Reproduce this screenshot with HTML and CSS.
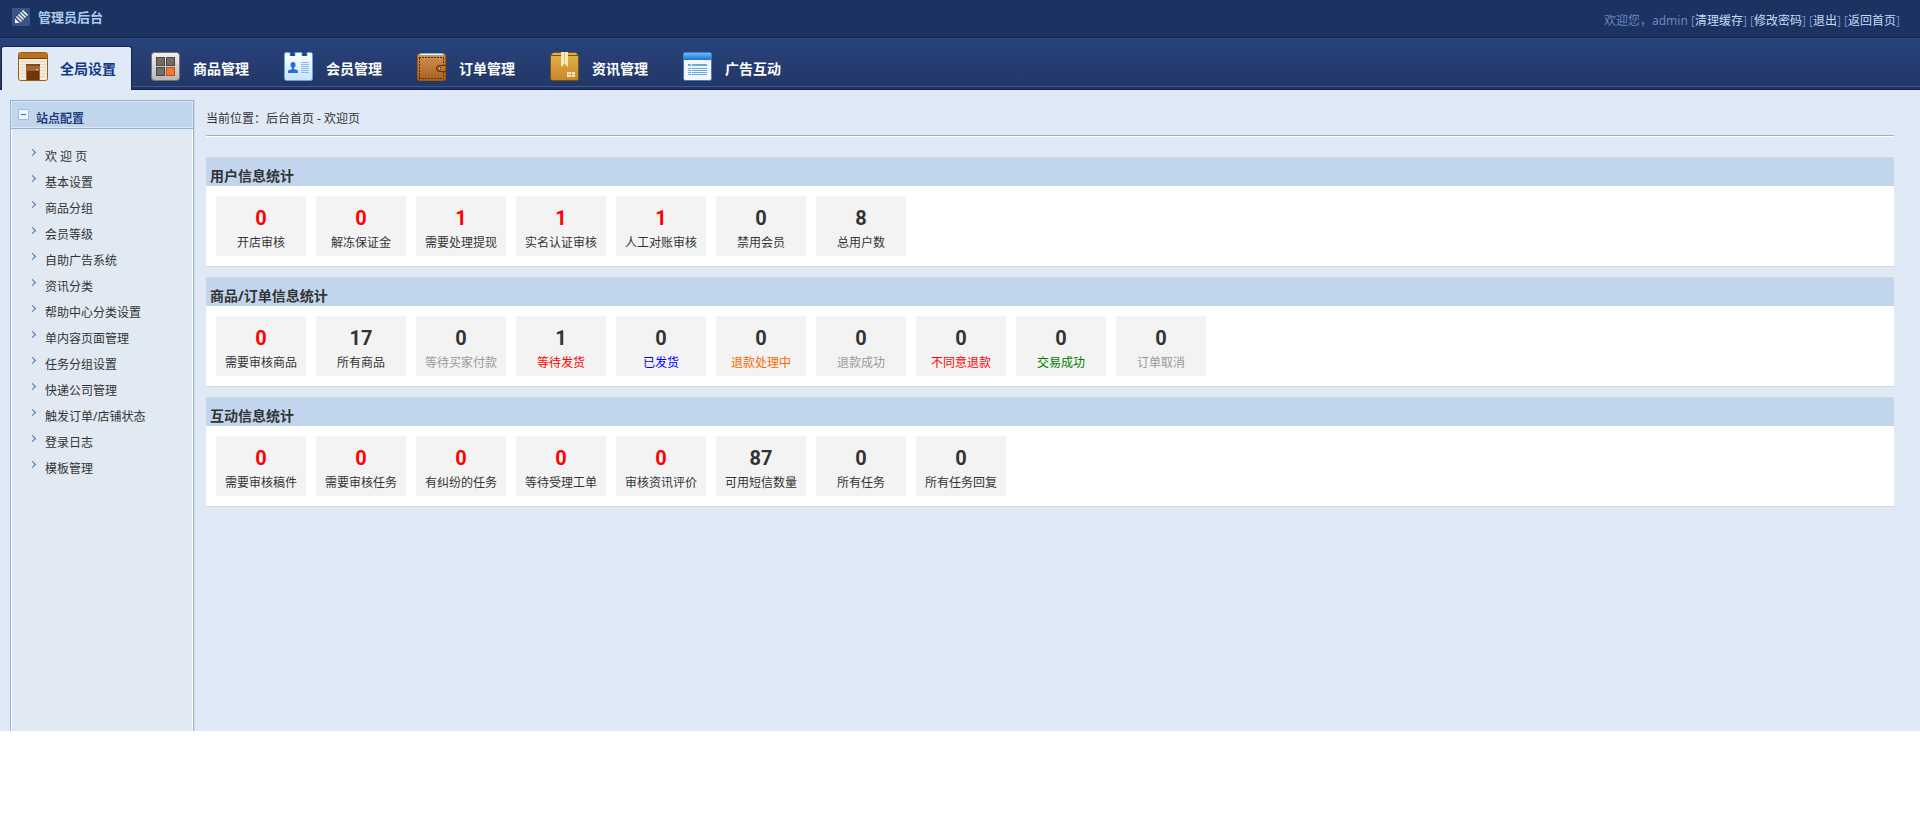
FILE: index.html
```html
<!DOCTYPE html>
<html lang="zh-CN">
<head>
  <meta charset="UTF-8">
  <meta name="viewport" content="width=device-width, initial-scale=1.0">
  <title>管理员后台</title>
  <link rel="stylesheet" href="styles.css">
</head>
<body>
  <header class="top">
    <h1 class="logo">
      <svg width="18" height="18" viewBox="0 0 18 18">
        <rect width="18" height="18" rx="1" fill="#3a5389"/>
        <path d="M3 15v-4.500l4.500 4.500z" fill="#fff"/>
        <path d="M4.500 8.500l5 5M6.500 6.500l5 5M8.500 4.500l5 5M10.500 2.500l5 5" stroke="#fff" stroke-width="1.500"/>
      </svg>
      管理员后台
    </h1>
    <p class="user">欢迎您，admin [<a href="#">清理缓存</a>] [<a href="#">修改密码</a>] [<a href="#">退出</a>] [<a href="#">返回首页</a>]</p>
  </header>

  <nav class="nav">
    <a href="#" class="tab active">
      <svg width="30" height="30" viewBox="0 0 30 30">
        <rect x=".5" y=".5" width="29" height="28" rx="2" fill="#f4ecdc" stroke="#a35a10"/>
        <path d="M2 9.500h26M2 12.500h26M2 15.500h26M2 18.500h26M2 21.500h26M2 24.500h26" stroke="#e2d7c2"/>
        <path d="M1 6V2q0-1 1-1h26q1 0 1 1v4z" fill="#b9711a"/>
        <path d="M1 6.500h28" stroke="#7c3b06"/>
        <rect x="8" y="12" width="14" height="16" fill="#a0683a"/>
        <path d="M8 12h14v2H8z" fill="#7e4a20"/>
        <rect x="9" y="19" width="12" height="9" fill="#74340a"/>
        <path d="M18 17.500h2" stroke="#f3c98a"/>
      </svg>
      <span>全局设置</span>
    </a>
    <a href="#" class="tab">
      <svg width="30" height="30" viewBox="0 0 30 30">
        <defs><linearGradient id="grey" x2="0" y2="1"><stop stop-color="#f2f2f2"/><stop offset="1" stop-color="#b5b5b5"/></linearGradient></defs>
        <rect x=".5" y=".5" width="28" height="28" rx="3" fill="url(#grey)" stroke="#77726e"/>
        <g fill="#756c67" stroke="#4b4542">
          <rect x="5.500" y="5.500" width="8" height="8"/>
          <rect x="15.500" y="5.500" width="8" height="8"/>
          <rect x="5.500" y="15.500" width="8" height="8"/>
        </g>
        <rect x="15.500" y="15.500" width="8" height="8" fill="#ee7a35" stroke="#c64d12"/>
      </svg>
      <span>商品管理</span>
    </a>
    <a href="#" class="tab">
      <svg width="30" height="30" viewBox="0 0 30 30">
        <defs><linearGradient id="card" x2="0" y2="1"><stop stop-color="#fff"/><stop offset="1" stop-color="#c5e4fb"/></linearGradient></defs>
        <path d="M2 .500h4v3h5v-3h7v3h5v-3h4q1.500 0 1.500 2v24q0 2-2 2H2.500q-2 0-2-2v-24q0-2 1.500-2z" fill="url(#card)" stroke="#6aa1ea"/>
        <path d="M8.500 0v4M20.500 0v4M6 3.500h5M18 3.500h5" stroke="#244a94"/>
        <ellipse cx="9" cy="13" rx="2.500" ry="3" fill="#2a6de0"/>
        <path d="M8 15h2v2l4 1.500V21H4v-2.500L8 17z" fill="#2a6de0"/>
        <path d="M17 10.500h8M17 12.500h8M17 14.500h8M17 16.500h8M17 18.500h8M17 20.500h8" stroke="#8fb6ee"/>
      </svg>
      <span>会员管理</span>
    </a>
    <a href="#" class="tab">
      <svg width="30" height="30" viewBox="0 0 30 30">
        <defs><linearGradient id="leather" x2="0" y2="1"><stop stop-color="#d2945c"/><stop offset="1" stop-color="#a9601a"/></linearGradient></defs>
        <rect x=".5" y="1.500" width="28" height="27" rx="2" fill="url(#leather)" stroke="#a4570f"/>
        <path d="M3 2.500h23" stroke="#e8f6fb"/>
        <path d="M4 1.500h22" stroke="#4fc3e4"/>
        <path d="M2 5.500h25M2.500 6v20M2 26.500h25M26.500 6v7M26.500 20v6" stroke="#5b2d08" stroke-dasharray="2 1" fill="none"/>
        <path d="M29 13.500h-7q-2.500 0-2.500 3t2.500 3h7z" fill="#c07728" stroke="#653208"/>
        <circle cx="22.500" cy="16.500" r="1.500" fill="#f2e2c2" stroke="#4d2504"/>
      </svg>
      <span>订单管理</span>
    </a>
    <a href="#" class="tab">
      <svg width="30" height="30" viewBox="0 0 30 30">
        <defs><linearGradient id="box" x2="0" y2="1"><stop stop-color="#e3b447"/><stop offset="1" stop-color="#c7862a"/></linearGradient></defs>
        <path d="M3 .500h23l2.500 3v23q0 2-2 2h-24q-2 0-2-2v-23z" fill="url(#box)" stroke="#79501a"/>
        <path d="M1 3.500h27" stroke="#79501a"/>
        <path d="M11 0h7v15l-3.500-3.500L11 15z" fill="#f8e8b8"/>
        <path d="M14.500 0v11" stroke="#e0c47c"/>
        <rect x="17" y="20" width="8" height="5" fill="#f6e6be"/>
        <path d="M18 22.500h6M21.500 20v5" stroke="#d9b36a"/>
      </svg>
      <span>资讯管理</span>
    </a>
    <a href="#" class="tab">
      <svg width="30" height="30" viewBox="0 0 30 30">
        <defs><linearGradient id="blue" x2="0" y2="1"><stop stop-color="#69bdf5"/><stop offset="1" stop-color="#1670d2"/></linearGradient></defs>
        <rect x=".5" y=".5" width="28" height="28" rx="2" fill="#f4f5f7" stroke="#3f7ccc"/>
        <path d="M1 8V2q0-1 1-1h25q1 0 1 1v6z" fill="url(#blue)"/>
        <path d="M5 13h3M9 13h15" stroke="#62a8e2" stroke-width="2"/>
        <path d="M5 16.500h3M9 16.500h15M5 18.500h3M9 18.500h15M5 20.500h3M9 20.500h15M5 22.500h3M9 22.500h15" stroke="#62a8e2"/>
      </svg>
      <span>广告互动</span>
    </a>
  </nav>

  <div class="page">
    <aside class="sidebar">
      <h2><button type="button" class="toggle" aria-label="收起"></button>站点配置</h2>
      <ul>
        <li><a href="#">欢 迎 页</a></li>
        <li><a href="#">基本设置</a></li>
        <li><a href="#">商品分组</a></li>
        <li><a href="#">会员等级</a></li>
        <li><a href="#">自助广告系统</a></li>
        <li><a href="#">资讯分类</a></li>
        <li><a href="#">帮助中心分类设置</a></li>
        <li><a href="#">单内容页面管理</a></li>
        <li><a href="#">任务分组设置</a></li>
        <li><a href="#">快递公司管理</a></li>
        <li><a href="#">触发订单/店铺状态</a></li>
        <li><a href="#">登录日志</a></li>
        <li><a href="#">模板管理</a></li>
      </ul>
    </aside>

    <main class="main">
      <p class="position">当前位置：后台首页 - 欢迎页</p>

      <section class="box">
        <h3>用户信息统计</h3>
        <div class="stats">
          <a href="#"><b class="red">0</b>开店审核</a>
          <a href="#"><b class="red">0</b>解冻保证金</a>
          <a href="#"><b class="red">1</b>需要处理提现</a>
          <a href="#"><b class="red">1</b>实名认证审核</a>
          <a href="#"><b class="red">1</b>人工对账审核</a>
          <a href="#"><b>0</b>禁用会员</a>
          <a href="#"><b>8</b>总用户数</a>
        </div>
      </section>

      <section class="box">
        <h3>商品/订单信息统计</h3>
        <div class="stats">
          <a href="#"><b class="red">0</b>需要审核商品</a>
          <a href="#"><b>17</b>所有商品</a>
          <a href="#"><b>0</b><span class="grey">等待买家付款</span></a>
          <a href="#"><b>1</b><span class="red">等待发货</span></a>
          <a href="#"><b>0</b><span class="blue">已发货</span></a>
          <a href="#"><b>0</b><span class="orange">退款处理中</span></a>
          <a href="#"><b>0</b><span class="grey">退款成功</span></a>
          <a href="#"><b>0</b><span class="red">不同意退款</span></a>
          <a href="#"><b>0</b><span class="green">交易成功</span></a>
          <a href="#"><b>0</b><span class="grey">订单取消</span></a>
        </div>
      </section>

      <section class="box">
        <h3>互动信息统计</h3>
        <div class="stats">
          <a href="#"><b class="red">0</b>需要审核稿件</a>
          <a href="#"><b class="red">0</b>需要审核任务</a>
          <a href="#"><b class="red">0</b>有纠纷的任务</a>
          <a href="#"><b class="red">0</b>等待受理工单</a>
          <a href="#"><b class="red">0</b>审核资讯评价</a>
          <a href="#"><b>87</b>可用短信数量</a>
          <a href="#"><b>0</b>所有任务</a>
          <a href="#"><b>0</b>所有任务回复</a>
        </div>
      </section>
    </main>
  </div>
</body>
</html>
```
FILE: styles.css
```css
* {
  box-sizing: border-box;
}
body, h1, h2, h3, p, ul {
  margin: 0;
  padding: 0;
}
body {
  font: 12px/20px "Noto Sans", "Noto Sans CJK SC", sans-serif;
  color: #333;
  background: #fff;
}
a {
  color: #333;
  text-decoration: none;
}
ul {
  list-style: none;
}

/* top bar */
.top {
  display: flex;
  justify-content: space-between;
  height: 38px;
  padding: 8px 20px 0 12px;
  background: #1c3260;
  border-bottom: 1px solid #14264e;
}
.logo {
  display: flex;
  gap: 8px;
  font-size: 13px;
  line-height: 18px;
  color: #acccf0;
}
.user {
  padding-top: 3px;
  color: #6c87c4;
}
.user a {
  color: #c6dcf7;
}

/* main tabs */
.nav {
  display: flex;
  gap: 2px;
  height: 52px;
  padding: 7px 1px 0;
  border-top: 1px solid #30498a;
  background: linear-gradient(#3c5796 1px, #1f3464 1px, #1f3464 3px, #121f4c 3px) 0 100% / 100% 4px no-repeat,
    linear-gradient(#28427c, #223764);
}
.tab {
  display: flex;
  gap: 12px;
  height: 44px;
  padding: 5px 15px 0 16px;
  border: 1px solid transparent;
  border-bottom: 0;
  font-size: 14px;
  font-weight: bold;
  color: #fff;
}
.tab span {
  padding-top: 7px;
}
.tab.active {
  color: #103a86;
  background: #e0eaf6;
  border-color: #14264e;
  border-radius: 3px 3px 0 0;
}

/* body */
.page {
  display: flex;
  gap: 12px;
  min-height: calc(100vh - 173px);
  padding: 10px 26px 0 10px;
  background: #e0eaf6;
}
.sidebar {
  flex: none;
  width: 184px;
  border: 1px solid #94b3d9;
  border-bottom: 0;
  background: #e1e9f3;
  box-shadow: inset 1px 0 #fff, inset -1px 0 #fff, 1px 0 #cddbed;
}
.sidebar h2 {
  display: flex;
  gap: 7px;
  height: 28px;
  padding: 8px 7px 0;
  font-size: 12px;
  color: #1d3f7d;
  background: #c1d5ec;
  border-bottom: 1px solid #94b3d9;
  box-shadow: inset 0 0 0 1px #dbe7f5;
}
.toggle {
  width: 11px;
  height: 11px;
  padding: 0;
  border: 1px solid #9cbde3;
  border-radius: 1px;
  background: linear-gradient(#3c6db0, #3c6db0) center / 5px 1px no-repeat, #eef5fd;
}
.sidebar ul {
  padding: 14px 0 0 19px;
}
.sidebar li {
  display: flex;
  gap: 10px;
  height: 26px;
  line-height: 28px;
}
.sidebar li::before {
  content: "";
  width: 4px;
  height: 4px;
  margin-top: 7px;
  border: solid #5570ae;
  border-width: 1px 1px 0 0;
  transform: rotate(45deg);
}

.main {
  flex: 1;
}
.position {
  height: 36px;
  padding-top: 9px;
  border-bottom: 1px solid #8fb2dd;
  box-shadow: 0 1px #fff;
  margin-bottom: 21px;
}
.box {
  margin-bottom: 10px;
  background: #fff;
  border: solid #d3d6da;
  border-width: 1px 0;
}
.box h3 {
  height: 28px;
  padding: 8px 4px 0;
  font-size: 14px;
  background: #c1d5ec;
}
.stats {
  display: flex;
  flex-wrap: wrap;
  gap: 10px;
  padding: 10px;
}
.stats a {
  width: 90px;
  height: 60px;
  padding-top: 12px;
  text-align: center;
  background: #f3f3f3;
}
.stats b {
  display: block;
  margin-bottom: 5px;
  font: bold 20px/20px Roboto, Arial, sans-serif;
}
.red {
  color: #f00;
}
.grey {
  color: #999;
}
.blue {
  color: #00f;
}
.orange {
  color: #f60;
}
.green {
  color: #008000;
}
```
